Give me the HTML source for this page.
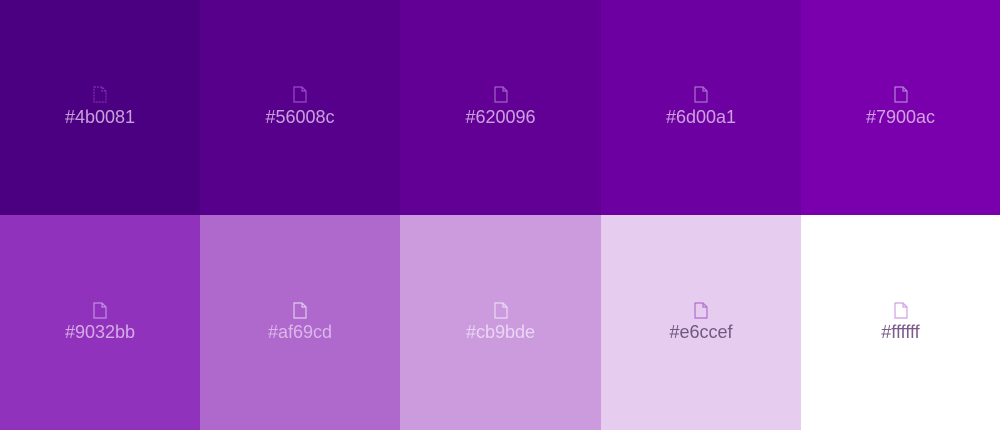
<!DOCTYPE html>
<html><head><style>
body{margin:0;width:1000px;height:430px;overflow:hidden;font-family:"Liberation Sans",sans-serif}
.g{display:grid;grid-template-columns:200px 200px 201px 200px 199px;grid-template-rows:215px 215px}
.c{position:relative}
.c svg{position:absolute;left:50%;margin-left:-7px;top:86px}
.c span{position:absolute;left:0;right:0;top:107px;text-align:center;font-size:18px}
.l span{color:rgba(230,200,240,.8)}
.d span{color:#6e5a7e}
</style></head><body><div class="g">
<div class="c l" style="background:#4b0081"><svg width="14" height="17"><path d="M1 1H9L13 5V16H1Z M9 1V5H13" fill="none" stroke="#8a2ab8" stroke-width="1.2" stroke-dasharray="2 1"/></svg><span>#4b0081</span></div>
<div class="c l" style="background:#56008c"><svg width="14" height="17"><path d="M1 1H9L13 5V16H1Z M9 1V5H13" fill="none" stroke="#9a4ac8" stroke-width="1.2"/></svg><span>#56008c</span></div>
<div class="c l" style="background:#620096"><svg width="14" height="17"><path d="M1 1H9L13 5V16H1Z M9 1V5H13" fill="none" stroke="#a060c8" stroke-width="1.2"/></svg><span>#620096</span></div>
<div class="c l" style="background:#6d00a1"><svg width="14" height="17"><path d="M1 1H9L13 5V16H1Z M9 1V5H13" fill="none" stroke="#a870d0" stroke-width="1.2"/></svg><span>#6d00a1</span></div>
<div class="c l" style="background:#7900ac"><svg width="14" height="17"><path d="M1 1H9L13 5V16H1Z M9 1V5H13" fill="none" stroke="#b080d8" stroke-width="1.2"/></svg><span>#7900ac</span></div>
<div class="c l" style="background:#9032bb"><svg width="14" height="17" style="top:87px"><path d="M1 1H9L13 5V16H1Z M9 1V5H13" fill="none" stroke="#c090e0" stroke-width="1.2"/></svg><span>#9032bb</span></div>
<div class="c l" style="background:#af69cd"><svg width="14" height="17" style="top:87px"><path d="M1 1H9L13 5V16H1Z M9 1V5H13" fill="none" stroke="#e0c8f0" stroke-width="1.2"/></svg><span>#af69cd</span></div>
<div class="c l" style="background:#cb9bde"><svg width="14" height="17" style="top:87px"><path d="M1 1H9L13 5V16H1Z M9 1V5H13" fill="none" stroke="#ead8f4" stroke-width="1.2"/></svg><span style="color:rgba(240,225,248,.85)">#cb9bde</span></div>
<div class="c d" style="background:#e6ccef"><svg width="14" height="17" style="top:87px"><path d="M1 1H9L13 5V16H1Z M9 1V5H13" fill="none" stroke="#b070d0" stroke-width="1.2"/></svg><span>#e6ccef</span></div>
<div class="c d" style="background:#ffffff"><svg width="14" height="17" style="top:87px"><path d="M1 1H9L13 5V16H1Z M9 1V5H13" fill="none" stroke="#cfa0e4" stroke-width="1.2"/></svg><span style="color:#7a5a8c">#ffffff</span></div>
</div>
</body></html>
